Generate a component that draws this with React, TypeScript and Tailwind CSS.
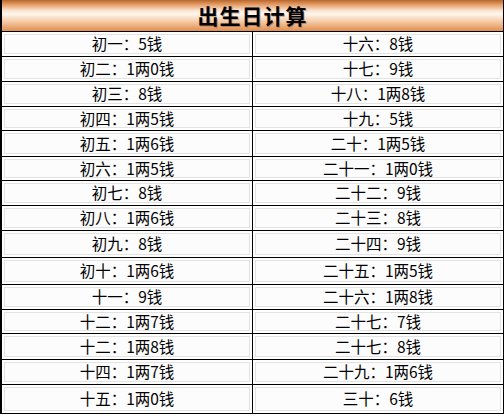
const rows: { left: string; right: string; h: string }[] = [
  { left: "初一：5钱", right: "十六：8钱", h: "h-[25px]" },
  { left: "初二：1两0钱", right: "十七：9钱", h: "h-[25px]" },
  { left: "初三：8钱", right: "十八：1两8钱", h: "h-[25px]" },
  { left: "初四：1两5钱", right: "十九：5钱", h: "h-[24px]" },
  { left: "初五：1两6钱", right: "二十：1两5钱", h: "h-[26px]" },
  { left: "初六：1两5钱", right: "二十一：1两0钱", h: "h-[24px]" },
  { left: "初七：8钱", right: "二十二：9钱", h: "h-[25px]" },
  { left: "初八：1两6钱", right: "二十三：8钱", h: "h-[25px]" },
  { left: "初九：8钱", right: "二十四：9钱", h: "h-[27px]" },
  { left: "初十：1两6钱", right: "二十五：1两5钱", h: "h-[27px]" },
  { left: "十一：9钱", right: "二十六：1两8钱", h: "h-[25px]" },
  { left: "十二：1两7钱", right: "二十七：7钱", h: "h-[24px]" },
  { left: "十二：1两8钱", right: "二十七：8钱", h: "h-[26px]" },
  { left: "十四：1两7钱", right: "二十九：1两6钱", h: "h-[25px]" },
  { left: "十五：1两0钱", right: "三十：6钱", h: "h-[28px]" },
];

// one table cell: faint inner frame like the spreadsheet export
const Cell = ({ text, divider }: { text: string; divider?: boolean }) => (
  <div className={`flex-1 flex p-[2px] ${divider ? "border-r border-black" : ""}`}>
    <div className="flex-1 flex items-center justify-center border border-[#e3e3e3] bg-[#fcfcfc] text-[15.5px] leading-none text-black">
      {text}
    </div>
  </div>
);

const App = () => {
  return (
    <div
      className="w-[504px] h-[416px] bg-white overflow-hidden"
      style={{ fontFamily: '"Noto Sans CJK SC", "Noto Sans", sans-serif' }}
    >
      <div className="flex flex-col border-l-2 border-r border-black border-b">
        {/* Title bar */}
        <div className="h-[32px] flex items-center justify-center border-b border-black bg-[linear-gradient(to_bottom,#b8662c_0%,#e39a62_14%,#fbe3cf_34%,#fff7ef_45%,#f5c9a4_70%,#e08e50_100%)]">
          <span className="text-[21px] font-bold tracking-[1px] text-black [text-shadow:1px_1px_0_rgba(90,40,10,0.35)]">
            出生日计算
          </span>
        </div>

        {/* Rows */}
        {rows.map((r, i) => (
          <div
            key={i}
            className={`flex ${r.h} ${i < rows.length - 1 ? "border-b border-black" : ""}`}
          >
            <Cell text={r.left} divider />
            <Cell text={r.right} />
          </div>
        ))}
      </div>
    </div>
  );
};

export default App;
